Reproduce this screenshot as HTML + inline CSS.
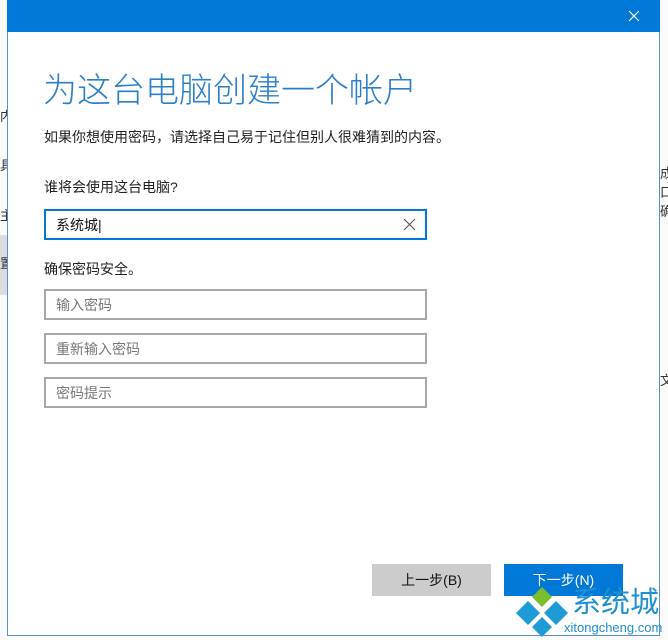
<!DOCTYPE html><html><head><meta charset="utf-8"><style>
body{margin:0;width:668px;height:640px;overflow:hidden;background:#f2f2f2;font-family:"Liberation Sans","Noto Sans CJK SC",sans-serif;position:relative}
.a{position:absolute}
.dlg{left:7px;top:0;width:653px;height:636px;background:#fff;border:1px solid #5a8fd0;box-sizing:border-box}
.bar{left:7px;top:0;width:653px;height:32px;background:#0078d7}
.inp{left:44px;width:383px;height:31px;border:2px solid #a8a8a8;box-sizing:border-box;font-size:14px;color:#777;padding:4px 10px}
.btn{top:564px;width:119px;height:32px;font-size:14px;text-align:center;line-height:32px}
</style></head><body>
<div class="a" style="left:0;top:0;width:668px;height:640px;background:#fafafa"></div>
<div class="a" style="left:0;top:235px;width:7px;height:60px;background:#dcdcdc"></div>
<div class="a" style="left:0;top:106px;font-size:13px;color:#333">内</div>
<div class="a" style="left:0;top:155px;font-size:13px;color:#333">具</div>
<div class="a" style="left:0;top:205px;font-size:13px;color:#333">主</div>
<div class="a" style="left:0;top:253px;font-size:13px;color:#333">置</div>
<div class="a" style="left:660px;top:163px;font-size:13px;color:#333">成<br>口<br>确</div>
<div class="a" style="left:660px;top:370px;font-size:13px;color:#333">文</div>
<div class="a dlg"></div>
<div class="a bar"></div>
<svg class="a" style="left:628px;top:10px" width="12" height="12"><path d="M1 1L11 11M11 1L1 11" stroke="#fff" stroke-width="1.2"/></svg>
<div class="a" style="left:43px;top:63px;font-size:34px;color:#2a7fcb;font-weight:300">为这台电脑创建一个帐户</div>
<div class="a" style="left:44px;top:127px;font-size:14px;color:#222">如果你想使用密码，请选择自己易于记住但别人很难猜到的内容。</div>
<div class="a" style="left:44px;top:177px;font-size:14px;color:#222">谁将会使用这台电脑?</div>
<div class="a inp" style="top:209px;border-color:#0078d7;color:#111">系统城|</div>
<svg class="a" style="left:403px;top:218px" width="13" height="13"><path d="M1 1L12 12M12 1L1 12" stroke="#555" stroke-width="1.1"/></svg>
<div class="a" style="left:44px;top:259px;font-size:14px;color:#222">确保密码安全。</div>
<div class="a inp" style="top:289px">输入密码</div>
<div class="a inp" style="top:333px">重新输入密码</div>
<div class="a inp" style="top:377px">密码提示</div>
<div class="a btn" style="left:372px;background:#ccc;color:#111">上一步(B)</div>
<div class="a btn" style="left:504px;background:#0078d7;color:#fff">下一步(N)</div>
<svg class="a" style="left:514px;top:585px" width="56" height="54"><path d="M28 2L38 12L28 22L18 12Z" fill="#7cbd2e"/><path d="M14 16L26 28L14 40L2 28Z" fill="#1e9ad6"/><path d="M42 16L54 28L42 40L30 28Z" fill="#1e9ad6"/><path d="M28 32L38 42L28 52L18 42Z" fill="#1e9ad6"/></svg>
<div class="a" style="left:572px;top:587px;font-size:29px;color:#1e8fd0;line-height:32px">系统城</div>
<div class="a" style="left:564px;top:620px;font-size:13px;color:#1e8fd0">xitongcheng.com</div>
</body></html>
